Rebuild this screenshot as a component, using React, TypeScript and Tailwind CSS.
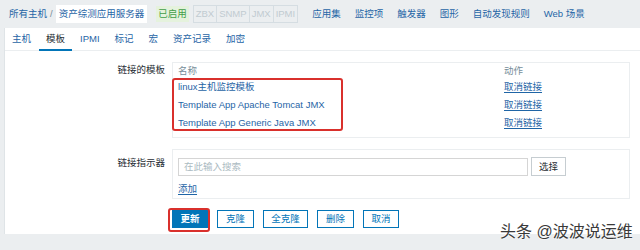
import React from 'react';

const NAV = ['应用集', '监控项', '触发器', '图形', '自动发现规则', 'Web 场景'];
const TABS = ['主机', '模板', 'IPMI', '标记', '宏', '资产记录', '加密'];
const TEMPLATES = ['linux主机监控模板', 'Template App Apache Tomcat JMX', 'Template App Generic Java JMX'];
const BUTTONS = [
  { label: '克隆', w: 'w-[37px]' },
  { label: '全克隆', w: 'w-[45px]' },
  { label: '删除', w: 'w-[37px]' },
  { label: '取消', w: 'w-[36px]' },
];

export default function App() {
  return (
    <div
      className="relative w-[640px] h-[250px] overflow-hidden bg-[#ebeef0] text-[9.5px] leading-none text-[#1f2c33]"
      style={{ fontFamily: '"Liberation Sans", "Noto Sans CJK SC", sans-serif' }}
    >
      {/* Top navigation */}
      <div className="h-[28px] flex items-center pl-[9px]">
        <span className="text-[#1f65a6]">所有主机</span>
        <span className="mx-[3px] text-[#768d99]">/</span>
        <span className="bg-white px-[3px] py-[4px] text-[#1f65a6]">资产综测应用服务器</span>
        <span className="ml-[9px] bg-[#e5f2dd] px-[2px] py-[3px] text-[#429e47]">已启用</span>
        <div className="ml-[4px] flex border border-[#d5dde2] text-[#c1cbd0]">
          <span className="px-[2px] py-[3px] border-r border-[#d5dde2]">ZBX</span>
          <span className="px-[2px] py-[3px] border-r border-[#d5dde2]">SNMP</span>
          <span className="px-[2px] py-[3px] border-r border-[#d5dde2]">JMX</span>
          <span className="px-[2px] py-[3px]">IPMI</span>
        </div>
        <div className="ml-[14px] flex gap-[14px] text-[#1f65a6]">
          {NAV.map(n => (
            <span key={n}>{n}</span>
          ))}
        </div>
      </div>

      {/* Card */}
      <div className="ml-[4px] h-[206px] bg-white border-l border-[#dfe4e7]">
        {/* Tabs */}
        <div className="h-[23px] flex items-end pl-[7px] gap-[15px] border-b border-[#ebeef0]">
          {TABS.map(t => (
            <div
              key={t}
              className={`h-[22px] flex items-center ${t === '模板' ? 'text-[#1f2c33] border-b-[2px] border-[#0275b8] -mb-px px-[7px] -mx-[7px]' : 'text-[#1f65a6]'}`}
            >
              {t}
            </div>
          ))}
        </div>

        {/* Form */}
        <div className="pt-[11px] flex flex-col">
          {/* Linked templates */}
          <div className="flex">
            <div className="w-[167px] pr-[7px] text-right pt-[3px] text-[#1f2c33]">链接的模板</div>
            <div className="relative w-[458px] border border-[#ebeef0] px-[5px] pb-[5px]">
              <div className="h-[15px] flex items-center text-[#768d99]">
                <span className="flex-1">名称</span>
                <span className="w-[120px]">动作</span>
              </div>
              {TEMPLATES.map(t => (
                <div key={t} className="h-[18px] flex items-center">
                  <span className="flex-1 text-[#1f65a6]">{t}</span>
                  <span className="w-[120px] text-[#1f65a6] underline underline-offset-2 decoration-[#1f65a6]">取消链接</span>
                </div>
              ))}
              <div className="absolute left-[-1px] top-[15px] w-[171px] h-[53px] border-[2px] border-[#d9302c] rounded-[3px]" />
            </div>
          </div>

          {/* Linked indicators */}
          <div className="flex mt-[11px]">
            <div className="w-[167px] pr-[7px] text-right pt-[9px] text-[#1f2c33]">链接指示器</div>
            <div className="w-[458px] h-[50px] border border-[#ebeef0] px-[5px] pt-[7px]">
              <div className="flex items-center gap-[3px]">
                <div className="w-[350px] h-[18px] border border-[#d5d5d5] flex items-center px-[5px] text-[#acbbc2]">
                  在此输入搜索
                </div>
                <button className="w-[35px] h-[19px] border border-[#c6cdd1] bg-white text-[#1f2c33] text-[9.5px]">选择</button>
              </div>
              <div className="mt-[8px] text-[#1f65a6] underline underline-offset-2">添加</div>
            </div>
          </div>

          {/* Buttons */}
          <div className="flex mt-[11px] pl-[167px] gap-[9px]">
            <div className="relative">
              <button className="w-[36px] h-[18px] bg-[#0275b8] text-white text-[9.5px] font-bold">更新</button>
              <div className="absolute -left-[4px] -top-[2px] w-[42px] h-[24px] border-[2px] border-[#d9302c] rounded-[3px]" />
            </div>
            {BUTTONS.map(b => (
              <button
                key={b.label}
                className={`h-[18px] border border-[#0275b8] bg-white text-[#0275b8] text-[9.5px] ${b.w}`}
              >
                {b.label}
              </button>
            ))}
          </div>
        </div>
      </div>

      {/* Watermark */}
      <div
        className="absolute left-[500px] top-[224px] text-[16px] text-[#3a3a3a] whitespace-nowrap"
        style={{ textShadow: '0 0 2px #fff, 0 0 2px #fff' }}
      >
        头条 @波波说运维
      </div>
    </div>
  );
}
